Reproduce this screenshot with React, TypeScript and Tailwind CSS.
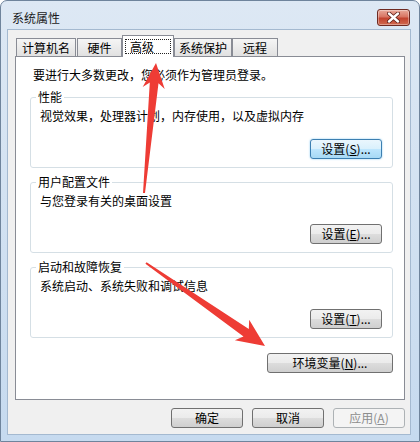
import type { ReactNode } from "react";

/* ── Win7 push button ── */
function WinButton({
  children,
  className = "",
  hot = false,
  disabled = false,
}: {
  children: ReactNode;
  className?: string;
  hot?: boolean;
  disabled?: boolean;
}) {
  const skin = disabled
    ? "border-[#adb2b5] bg-[#f4f4f4] text-[#8d8d8d]"
    : hot
      ? "border-[#3c7fb1] bg-[linear-gradient(to_bottom,#eaf6fd_0%,#d9f0fc_50%,#bee6fd_50%,#a7d9f5_100%)] text-black shadow-[0_0_2px_#7fc4ef]"
      : "border-[#707070] bg-[linear-gradient(to_bottom,#f2f2f2_0%,#ebebeb_50%,#dddddd_50%,#cfcfcf_100%)] text-black";
  return (
    <button
      type="button"
      className={`h-[20px] rounded-[3px] border ${skin} flex items-center justify-center text-[12px] leading-[16px] ${className}`}
    >
      {children}
    </button>
  );
}

function Accel({ label, k }: { label: string; k: string }) {
  return (
    <span>
      {label}(<span className="underline">{k}</span>)...
    </span>
  );
}

/* ── Group box ── */
function Group({
  title,
  desc,
  button,
}: {
  title: string;
  desc: string;
  button: ReactNode;
}) {
  return (
    <fieldset className="min-w-0 rounded-[3px] border border-[#d5dfe5] pl-[5px] pr-[10px] pb-[8px]">
      <legend className="px-[2px] text-[12px] leading-[16px]">{title}</legend>
      <p className="ml-[4px] mt-[3px] text-[12px] leading-[16px]">{desc}</p>
      <div className="mt-[15px] flex justify-end">{button}</div>
    </fieldset>
  );
}

/* ── Annotation arrow ── */
function arrow(
  tx: number,
  ty: number,
  px: number,
  py: number,
  head = 24,
  half = 10.5,
  neck = 3.8,
  tail = 0.8
) {
  const dx = px - tx;
  const dy = py - ty;
  const len = Math.hypot(dx, dy);
  const ux = dx / len;
  const uy = dy / len;
  const nx = -uy;
  const ny = ux;
  const nkx = px - ux * (head - 5);
  const nky = py - uy * (head - 5);
  const bx = px - ux * head;
  const by = py - uy * head;
  const pts = [
    [tx + nx * tail, ty + ny * tail],
    [nkx + nx * neck, nky + ny * neck],
    [bx + nx * half, by + ny * half],
    [px, py],
    [bx - nx * half, by - ny * half],
    [nkx - nx * neck, nky - ny * neck],
    [tx - nx * tail, ty - ny * tail],
  ];
  return pts.map((p) => `${p[0].toFixed(1)},${p[1].toFixed(1)}`).join(" ");
}

const tabBase =
  "h-[18px] border border-b-0 border-[#898c95] bg-[linear-gradient(to_bottom,#f5f5f5,#e1e1e1)] flex items-center justify-center text-[12px] leading-[16px]";

export default function App() {
  return (
    <div className="relative h-[442px] w-[420px] overflow-hidden rounded-t-[7px] border border-[#6f849c] bg-[linear-gradient(to_bottom,#dde8f4,#c6daef)] font-['Noto_Sans_CJK_SC',sans-serif] text-black">
      {/* Title bar */}
      <div className="flex h-[28px] items-start justify-between pl-[11px] pr-[9px]">
        <span className="pt-[9px] text-[12px] leading-[16px] text-[#1b1b1b]">
          系统属性
        </span>
        <div className="mt-[8px] flex h-[17px] w-[33px] items-center justify-center rounded-[3px] border border-[#6e2a22] bg-[linear-gradient(to_bottom,#e9a99a_0%,#d87563_45%,#c2432f_55%,#d06a4f_100%)] shadow-[inset_0_0_0_1px_rgba(255,255,255,0.35)]">
          <svg width="13" height="11" viewBox="0 0 13 11">
            <path
              d="M2 1.5 L11 9.5 M11 1.5 L2 9.5"
              stroke="#5a1c14"
              strokeWidth="4"
              strokeLinecap="round"
            />
            <path
              d="M2 1.5 L11 9.5 M11 1.5 L2 9.5"
              stroke="#ffffff"
              strokeWidth="2.4"
              strokeLinecap="round"
            />
          </svg>
        </div>
      </div>

      {/* Client area */}
      <div className="ml-[6px] h-[406px] w-[404px] border border-[#a4b9d0] bg-[#f0f0f0]">
        {/* Tabs */}
        <div className="flex h-[26px] items-end pl-[8px]">
          <div className={`${tabBase} w-[60px]`}>计算机名</div>
          <div className={`${tabBase} ml-[1px] w-[45px]`}>硬件</div>
          <div className="relative z-10 -mb-px flex h-[22px] w-[52px] items-center border border-b-0 border-[#898c95] bg-white px-[2px]">
            <span className="flex h-[15px] w-full items-center border border-dotted border-[#222] pl-[4px] text-[12px] leading-[13px]">
              高级
            </span>
          </div>
          <div className={`${tabBase} w-[58px]`}>系统保护</div>
          <div className={`${tabBase} w-[46px]`}>远程</div>
        </div>

        {/* Panel */}
        <div className="ml-[7px] flex h-[344px] w-[390px] flex-col border border-[#898c95] bg-white pl-[14px] pr-[11px] pt-[10px]">
          <p className="ml-[3px] text-[12px] leading-[16px]">
            要进行大多数更改，您必须作为管理员登录。
          </p>
          <div className="mt-[6px] flex flex-col gap-[6px]">
            <Group
              title="性能"
              desc="视觉效果，处理器计划，内存使用，以及虚拟内存"
              button={
                <WinButton hot className="w-[72px]">
                  <Accel label="设置" k="S" />
                </WinButton>
              }
            />
            <Group
              title="用户配置文件"
              desc="与您登录有关的桌面设置"
              button={
                <WinButton className="w-[72px]">
                  <Accel label="设置" k="E" />
                </WinButton>
              }
            />
            <Group
              title="启动和故障恢复"
              desc="系统启动、系统失败和调试信息"
              button={
                <WinButton className="w-[72px]">
                  <Accel label="设置" k="T" />
                </WinButton>
              }
            />
          </div>
          <div className="mt-[15px] flex justify-end">
            <WinButton className="w-[126px]">
              <Accel label="环境变量" k="N" />
            </WinButton>
          </div>
        </div>

        {/* Dialog buttons */}
        <div className="mt-[8px] flex justify-end gap-[9px] pr-[5px]">
          <WinButton className="w-[72px]">确定</WinButton>
          <WinButton className="w-[72px]">取消</WinButton>
          <WinButton disabled className="w-[72px]">
            应用(<span className="underline">A</span>)
          </WinButton>
        </div>
      </div>

      {/* Red annotation arrows */}
      <svg
        className="pointer-events-none absolute left-0 top-0"
        width="420"
        height="442"
        viewBox="0 0 420 442"
      >
        <polygon points={arrow(143, 192, 155, 62, 25, 11, 4.4, 1)} fill="#ee3c35" />
        <polygon points={arrow(145, 262, 264, 345, 28, 12.5, 4.6, 1)} fill="#ee3c35" />
      </svg>
    </div>
  );
}
